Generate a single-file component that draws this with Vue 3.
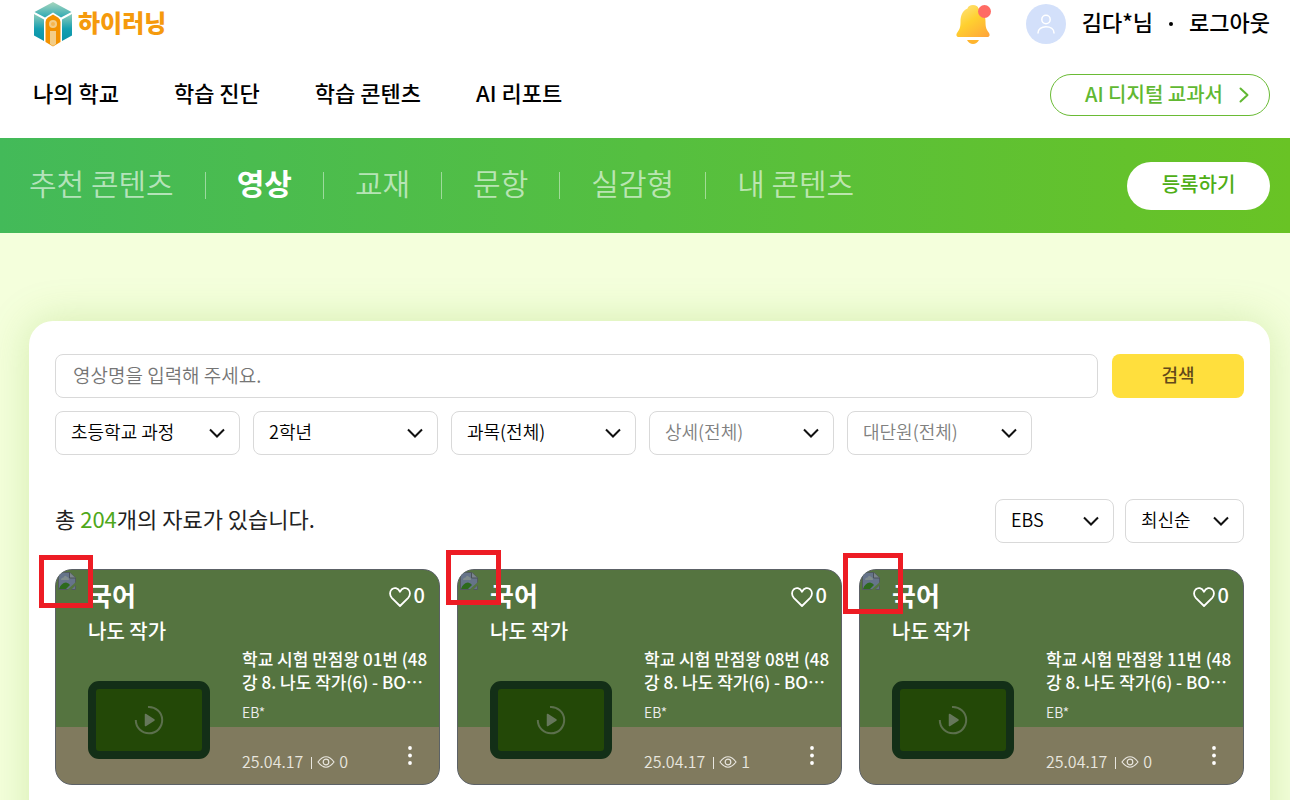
<script setup>
import { ref } from 'vue'

const menu = ['나의 학교', '학습 진단', '학습 콘텐츠', 'AI 리포트']
const tabs = ['추천 콘텐츠', '영상', '교재', '문항', '실감형', '내 콘텐츠']
const activeTab = ref('영상')
const keyword = ref('')

const filters = [
  { label: '학교 과정', value: '초등학교 과정' },
  { label: '학년', value: '2학년' },
  { label: '과목', value: '과목(전체)' },
  { label: '상세', value: '상세(전체)', muted: true },
  { label: '대단원', value: '대단원(전체)', muted: true },
]
const sorts = [
  { label: '출처', value: 'EBS' },
  { label: '정렬', value: '최신순' },
]
const cards = [
  { no: '01', likes: 0, views: 0, mark: 'mark-a' },
  { no: '08', likes: 0, views: 1, mark: 'mark-b' },
  { no: '11', likes: 0, views: 0, mark: 'mark-c' },
]
</script>

<template>
  <div class="page">
    <header class="header">
      <div class="top">
        <a href="#" class="logo">
          <svg width="40" height="46" viewBox="0 0 40 46" aria-hidden="true">
            <defs>
              <linearGradient id="cubeTop" x1="0" y1="0" x2="0" y2="1">
                <stop offset="0" stop-color="#a6d6bd" />
                <stop offset="1" stop-color="#2fa9b4" />
              </linearGradient>
              <linearGradient id="cubeSide" x1="0" y1="0" x2="0" y2="1">
                <stop offset="0" stop-color="#8fcdbb" />
                <stop offset="0.55" stop-color="#159fb0" />
                <stop offset="1" stop-color="#0a93a9" />
              </linearGradient>
            </defs>
            <path d="M20 1 38.500 11 28 16.500 20 11.500 12 16.500 1.500 11Z" fill="url(#cubeTop)" />
            <path d="M1 13 11 18.500V40L1 34.500Z" fill="url(#cubeSide)" />
            <path d="M39 13 29 18.500V40L39 34.500Z" fill="url(#cubeSide)" />
            <path d="M12.500 41V21Q12.500 18 15 16.500L20 13.500 25 16.500Q27.500 18 27.500 21V41L20 45.500Z" fill="#f39200" />
            <path d="M17 30H23V43L20 45 17 43Z" fill="#f3cd87" />
            <circle cx="20" cy="23" r="4" fill="#f3cd87" />
            <circle cx="20" cy="23" r="2" fill="#f6b54e" />
          </svg>
          <span>하이러닝</span>
        </a>
        <div class="user">
          <button class="bell" aria-label="알림">
            <svg width="36" height="40" viewBox="0 0 36 40" aria-hidden="true">
              <defs>
                <linearGradient id="bell" x1="0.2" y1="0" x2="0.9" y2="1">
                  <stop offset="0" stop-color="#ffe27a" />
                  <stop offset="0.45" stop-color="#ffd02f" />
                  <stop offset="1" stop-color="#ffa63a" />
                </linearGradient>
              </defs>
              <path d="M17 1c3 0 5 1.500 5.500 3.500C28 7 29.500 12 29.500 18c0 6 1.200 7.500 3.200 10.500C34.500 31 33.500 33 31 33H3C.5 33-.5 31 1.300 28.500 3.300 25.500 4.500 24 4.500 18c0-6 1.500-11 7-13.500C12 2.500 14 1 17 1Z" fill="url(#bell)" />
              <path d="M11 36H23C21.500 38.500 19.500 40 17 40S12.500 38.500 11 36Z" fill="#ffb52e" />
              <circle cx="28.500" cy="7.500" r="6.500" fill="#ff6b64" />
            </svg>
          </button>
          <span class="avatar">
            <svg width="18" height="20" viewBox="0 0 18 20" fill="none" stroke="#fff" stroke-width="1.500" stroke-linecap="round" aria-hidden="true">
              <circle cx="9" cy="5.500" r="4.200" />
              <path d="M1 19C1 15 4.500 12.700 9 12.700S17 15 17 19" />
            </svg>
          </span>
          <span class="user-text">김다*님</span>
          <span class="dot"></span>
          <a href="#" class="user-text">로그아웃</a>
        </div>
      </div>
      <div class="main-nav">
        <nav>
          <a v-for="item in menu" :key="item" href="#">{{ item }}</a>
        </nav>
        <a href="#" class="textbook">
          <span>AI 디지털 교과서</span>
          <svg width="10" height="16" viewBox="0 0 10 16" fill="none" stroke="currentColor" stroke-width="2" stroke-linecap="round" stroke-linejoin="round" aria-hidden="true">
            <path d="M1.500 1.500 8.500 8 1.500 14.500" />
          </svg>
        </a>
      </div>
    </header>

    <div class="band">
      <nav class="tabs">
        <a v-for="tab in tabs" :key="tab" href="#" :class="{ active: tab === activeTab }" @click.prevent="activeTab = tab">{{ tab }}</a>
      </nav>
      <button class="register">등록하기</button>
    </div>

    <main class="panel">
      <form class="search" @submit.prevent>
        <input v-model="keyword" type="text" aria-label="영상명" placeholder="영상명을 입력해 주세요." />
        <button>검색</button>
      </form>
      <div class="filters">
        <label v-for="f in filters" :key="f.label" class="select" :class="{ muted: f.muted }">
          <select :aria-label="f.label"><option>{{ f.value }}</option></select>
          <svg width="16" height="10" viewBox="0 0 16 10" aria-hidden="true"><path d="M1 1.500 8 8.500 15 1.500" /></svg>
        </label>
      </div>
      <div class="result">
        <p>총 <em>204</em>개의 자료가 있습니다.</p>
        <div class="sorts">
          <label v-for="s in sorts" :key="s.label" class="select">
            <select :aria-label="s.label"><option>{{ s.value }}</option></select>
            <svg width="16" height="10" viewBox="0 0 16 10" aria-hidden="true"><path d="M1 1.500 8 8.500 15 1.500" /></svg>
          </label>
        </div>
      </div>
      <div class="cards">
        <article v-for="card in cards" :key="card.no" class="card">
          <svg class="broken" width="18" height="18" viewBox="0 0 18 18" aria-hidden="true">
            <path d="M.5.5H12L17.500 6V17.500H.5Z" fill="#66748a" stroke="#535a5e" />
            <path d="M3 8Q3 5.500 5.500 5.500 7 2.500 9 5 11 5 11 8Z" fill="#7f8c8c" />
            <path d="M1 17Q3 11 8 10.500 11 11 12 13L8 17Z" fill="#2d6a1d" />
            <path d="M11.500.5V6H17.500" fill="#7c858c" stroke="#4a5258" />
            <path d="M9 18 18 10V13L13 18Z" fill="#557440" />
          </svg>
          <div class="card-head">
            <h2>국어</h2>
            <button class="like" aria-label="좋아요">
              <svg width="22" height="20" viewBox="0 0 22 20" fill="none" stroke="#fff" stroke-width="1.800" stroke-linejoin="round" aria-hidden="true">
                <path d="M11 19 2.800 10.800C.5 8.300.5 4.700 2.600 2.500 5 .2 8.800.6 11 4.700 13.200.6 17 .2 19.400 2.500 21.500 4.700 21.500 8.300 19.200 10.800Z" />
              </svg>
              <span>{{ card.likes }}</span>
            </button>
          </div>
          <h3>나도 작가</h3>
          <div class="card-body">
            <div class="thumb">
              <svg width="30" height="30" viewBox="0 0 30 30" aria-hidden="true">
                <path d="M14 2A13.200 13.200 0 1 1 1.800 15" fill="none" stroke="#5c704d" stroke-width="2" />
                <path d="M11.500 9.500 20 15 11.500 20.500Z" fill="#66775b" stroke="#66775b" stroke-width="1.500" stroke-linejoin="round" />
              </svg>
            </div>
            <div class="info">
              <p class="title"><span class="line">학교 시험 만점왕 {{ card.no }}번 (48</span><span class="line">강 8. 나도 작가(6) - BO<span class="more-text" lang="ja">…</span></span></p>
              <p class="source">EB*</p>
              <div class="meta">
                <span>25.04.17</span>
                <span class="bar"></span>
                <svg width="18" height="12" viewBox="0 0 18 12" fill="none" stroke="currentColor" stroke-width="1.200" aria-hidden="true">
                  <path d="M1 6Q9-4.500 17 6 9 16.500 1 6Z" />
                  <circle cx="9" cy="6" r="2.800" />
                </svg>
                <span>{{ card.views }}</span>
                <button class="more" aria-label="더보기">
                  <svg width="4" height="20" viewBox="0 0 4 20" fill="#fff" aria-hidden="true">
                    <circle cx="2" cy="2" r="1.900" /><circle cx="2" cy="9.500" r="1.900" /><circle cx="2" cy="17" r="1.900" />
                  </svg>
                </button>
              </div>
            </div>
          </div>
          <span class="mark" :class="card.mark"></span>
        </article>
      </div>
    </main>
  </div>
</template>

<style>
body {
  margin: 0;
  background: #f4ffdc;
}
</style>

<style scoped>
.page {
  font-family: "Noto Sans CJK KR", "Noto Sans", sans-serif;
  color: #000;
  overflow: hidden;
}
.page * {
  box-sizing: border-box;
}
a {
  color: inherit;
  text-decoration: none;
}
button,
input,
select {
  font: inherit;
}
button {
  border: 0;
  padding: 0;
  background: none;
  cursor: pointer;
}
p,
h2,
h3 {
  margin: 0;
}
svg {
  display: block;
  flex: none;
}
.header {
  height: 138px;
  padding: 0 20px 0 33px;
  background: #fff;
  font-size: 22px;
  font-weight: 500;
}
.top {
  display: flex;
  align-items: center;
  justify-content: space-between;
  height: 48px;
}
.logo {
  display: flex;
  align-items: center;
  gap: 5px;
  color: #f59a0c;
  font-size: 24px;
  font-weight: 900;
}
.logo span {
  padding-bottom: 4px;
  line-height: 42px;
}
.user {
  display: flex;
  align-items: center;
}
.user-text {
  padding-bottom: 6px;
  line-height: 42px;
}
.bell {
  margin-right: 34px;
}
.avatar {
  display: flex;
  align-items: center;
  justify-content: center;
  width: 40px;
  height: 40px;
  margin-right: 16px;
  border-radius: 50%;
  background: #d3e0fa;
}
.dot {
  width: 4px;
  height: 4px;
  margin: 0 16px;
  border-radius: 50%;
  background: #000;
}
.main-nav {
  display: flex;
  align-items: center;
  justify-content: space-between;
  margin-top: 26px;
}
.main-nav nav {
  display: flex;
  gap: 55px;
  padding-bottom: 6px;
  line-height: 36px;
}
.textbook {
  display: flex;
  align-items: center;
  justify-content: flex-end;
  gap: 16px;
  width: 220px;
  height: 42px;
  padding-right: 20px;
  border: 1px solid #6abb35;
  border-radius: 21px;
  color: #61b832;
  font-size: 20px;
}
.textbook span {
  padding-bottom: 2px;
  line-height: 36px;
}
.band {
  display: flex;
  align-items: center;
  justify-content: space-between;
  height: 95px;
  padding: 0 20px 0 29px;
  background: linear-gradient(90deg, #43ba59, #55bf40 50%, #69c325);
}
.tabs {
  display: flex;
  align-items: center;
  padding-bottom: 8px;
  font-size: 30px;
  line-height: 44px;
  font-weight: 350;
  color: rgba(255, 255, 255, 0.62);
}
.tabs a {
  display: flex;
  align-items: center;
}
.tabs a + a::before {
  content: "";
  width: 1px;
  height: 27px;
  margin: 8px 31px 0;
  background: rgba(255, 255, 255, 0.45);
}
.tabs .active {
  color: #fff;
  font-weight: 700;
}
.register {
  width: 143px;
  height: 48px;
  padding-bottom: 4px;
  border-radius: 24px;
  background: #fff;
  color: #4fae16;
  font-size: 20px;
  font-weight: 500;
}
.panel {
  margin: 88px 20px 0 29px;
  padding: 33px 26px 60px;
  border-radius: 24px 24px 0 0;
  background: #fff;
  box-shadow: 0 0 40px rgba(120, 180, 40, 0.25);
}
.search {
  display: flex;
  gap: 14px;
}
.search input {
  flex: 1;
  min-width: 0;
  height: 44px;
  padding: 0 17px 4px;
  border: 1px solid #d9d9d9;
  border-radius: 8px;
  background: #fff;
  font-size: 19px;
  font-weight: 350;
}
.search input::placeholder {
  color: #757575;
}
.search button {
  width: 132px;
  height: 44px;
  padding-bottom: 4px;
  border-radius: 8px;
  background: #ffdf3d;
  color: #63491a;
  font-size: 18px;
  font-weight: 500;
}
.filters {
  display: flex;
  gap: 13px;
  margin-top: 13px;
}
.select {
  position: relative;
  width: 185px;
}
.select select {
  appearance: none;
  display: block;
  width: 100%;
  height: 44px;
  padding: 0 15px 4px;
  border: 1px solid #d9d9d9;
  border-radius: 8px;
  background: #fff;
  color: #000;
  font-size: 18px;
  font-weight: 350;
}
.select.muted select {
  color: #808080;
}
.select svg {
  position: absolute;
  top: 17px;
  right: 15px;
  fill: none;
  stroke: #111;
  stroke-width: 2;
  pointer-events: none;
}
.result {
  display: flex;
  align-items: center;
  justify-content: space-between;
  margin-top: 44px;
  color: #222;
  font-size: 22px;
}
.result p {
  padding-bottom: 6px;
  line-height: 36px;
}
.result em {
  color: #4fa81a;
  font-style: normal;
}
.sorts {
  display: flex;
  gap: 11px;
}
.sorts .select {
  width: 119px;
}
.cards {
  display: grid;
  grid-template-columns: repeat(3, minmax(0, 1fr));
  gap: 17px;
  margin-top: 26px;
}
.card {
  position: relative;
  height: 216px;
  padding: 9px 14px 0 32px;
  border: 1px solid #5c6166;
  border-radius: 17px;
  background: linear-gradient(#557440 157px, #807a5e 157px);
  color: #fff;
}
.broken {
  position: absolute;
  top: 2px;
  left: 2px;
  clip-path: inset(0 round 8px 0 0 0);
}
.card-head {
  display: flex;
  align-items: center;
  justify-content: space-between;
  height: 36px;
}
h2 {
  padding-bottom: 4px;
  font-size: 26px;
  line-height: 36px;
  font-weight: 700;
}
.like {
  display: flex;
  align-items: center;
  gap: 3px;
  color: #fff;
  font-size: 20px;
  line-height: 32px;
  font-weight: 500;
}
.like span {
  padding-bottom: 4px;
}
h3 {
  font-size: 20px;
  line-height: 32px;
  font-weight: 500;
}
.card-body {
  display: flex;
  gap: 32px;
}
.thumb {
  display: flex;
  align-items: center;
  justify-content: center;
  flex: none;
  width: 122px;
  height: 78px;
  margin-top: 34px;
  border: 8px solid #132f17;
  border-radius: 11px;
  background: #234807;
}
.info {
  flex: 1;
  min-width: 0;
}
.title {
  font-size: 17px;
  line-height: 23px;
  font-weight: 500;
}
.line {
  display: block;
  white-space: nowrap;
}
.more-text {
  font-family: "Noto Sans CJK JP", sans-serif;
}
.source {
  margin-top: 9px;
  font-size: 14px;
  line-height: 20px;
  font-weight: 350;
  color: #eee;
}
.meta {
  display: flex;
  align-items: center;
  margin-top: 29px;
  color: #e8e6df;
  font-size: 16px;
  line-height: 20px;
  font-weight: 350;
}
.meta svg {
  margin: 2px 4px 0 0;
}
.bar {
  width: 1px;
  height: 12px;
  margin: 3px 5px 0 8px;
  background: #e8e6df;
}
.more {
  margin: -12px 9px 0 auto;
}
.mark {
  position: absolute;
  border: 5px solid #ed1c24;
}
.mark-a {
  top: -15px;
  left: -17px;
  width: 54px;
  height: 53px;
}
.mark-b {
  top: -20px;
  left: -12px;
  width: 55px;
  height: 55px;
}
.mark-c {
  top: -17px;
  left: -17px;
  width: 60px;
  height: 61px;
}
</style>
